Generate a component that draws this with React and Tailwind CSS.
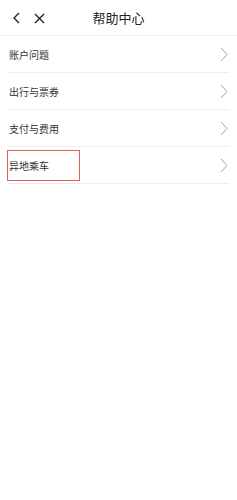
const items = ["账户问题", "出行与票券", "支付与费用", "异地乘车"];

function Arrow() {
  return (
    <svg width="8" height="15" viewBox="0 0 8 15" className="mr-[1px]">
      <polyline points="1,1 7,7.5 1,14" fill="none" stroke="#a0a0a0" strokeWidth="1" />
    </svg>
  );
}

export default function App() {
  return (
    <div
      className="w-[237px] h-[500px] bg-white text-[#333]"
      style={{ fontFamily: '"Noto Sans CJK SC", "Noto Sans", sans-serif' }}
    >
      <div className="relative h-[36px] flex items-center border-b border-[#f0f0f0]">
        <div className="flex items-center pl-[13px] gap-[14px] pt-[1px]">
          <svg width="7" height="12" viewBox="0 0 7 12">
            <polyline points="6,1 1,6 6,11" fill="none" stroke="#222" strokeWidth="1.4" />
          </svg>
          <svg width="11" height="11" viewBox="0 0 11 11">
            <path d="M1 1 L10 10 M10 1 L1 10" stroke="#222" strokeWidth="1.4" />
          </svg>
        </div>
        <div className="absolute inset-0 flex items-center justify-center pointer-events-none text-[13px] text-[#222]">
          帮助中心
        </div>
      </div>
      <ul className="px-[8px]">
        {items.map((item, i) => (
          <li
            key={item}
            className="h-[37px] flex items-center justify-between border-b border-[#eeeeee]"
          >
            <span
              className={
                i === 3
                  ? "h-[31px] w-[73px] -ml-[1px] pl-[1px] flex items-center border border-[#e06060] text-[10px]"
                  : "pl-[1px] text-[10px]"
              }
            >
              {item}
            </span>
            <Arrow />
          </li>
        ))}
      </ul>
    </div>
  );
}
